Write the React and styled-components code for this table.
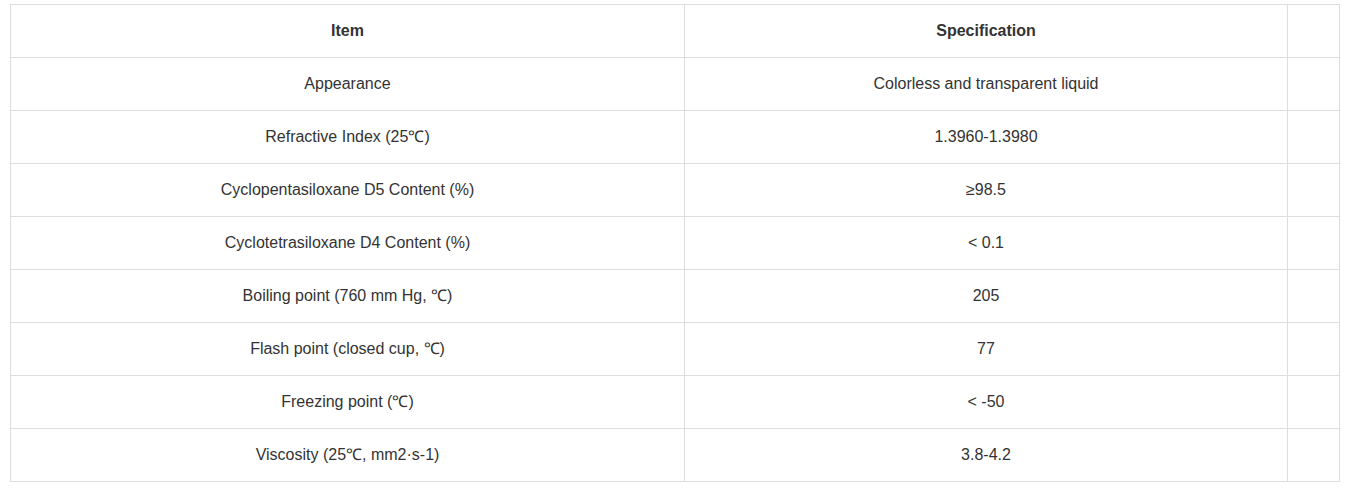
import React from 'react';
import styled, { createGlobalStyle } from 'styled-components';

const GlobalStyle = createGlobalStyle`
  body {
    margin: 0;
    background: #fff;
    font-family: "Liberation Sans", Arial, sans-serif;
  }
`;

const Page = styled.div`
  padding: 4px 10px 0 10px;
`;

const Table = styled.table`
  width: 1329px;
  border-collapse: collapse;
  table-layout: fixed;
  color: #333;
  font-size: 16px;
  line-height: 18px;
`;

const Cell = styled.td`
  border: 1px solid #ddd;
  height: 52px;
  padding: 0 8px;
  text-align: center;
  vertical-align: middle;
  font-weight: ${(p) => (p.$head ? 'bold' : 'normal')};
`;

const rows = [
  ['Appearance', 'Colorless and transparent liquid'],
  ['Refractive Index (25℃)', '1.3960-1.3980'],
  ['Cyclopentasiloxane D5 Content (%)', '≥98.5'],
  ['Cyclotetrasiloxane D4 Content (%)', '< 0.1'],
  ['Boiling point (760 mm Hg, ℃)', '205'],
  ['Flash point (closed cup, ℃)', '77'],
  ['Freezing point (℃)', '< -50'],
  ['Viscosity (25℃, mm2·s-1)', '3.8-4.2'],
];

const App = () => {
  return (
    <Page>
      <GlobalStyle />
      <Table>
        <colgroup>
          <col style={{ width: 674 }} />
          <col style={{ width: 603 }} />
          <col style={{ width: 52 }} />
        </colgroup>
        <tbody>
          <tr>
            <Cell $head>Item</Cell>
            <Cell $head>Specification</Cell>
            <Cell />
          </tr>
          {rows.map(([item, spec]) => (
            <tr key={item}>
              <Cell>{item}</Cell>
              <Cell>{spec}</Cell>
              <Cell />
            </tr>
          ))}
        </tbody>
      </Table>
    </Page>
  );
};

export default App;
